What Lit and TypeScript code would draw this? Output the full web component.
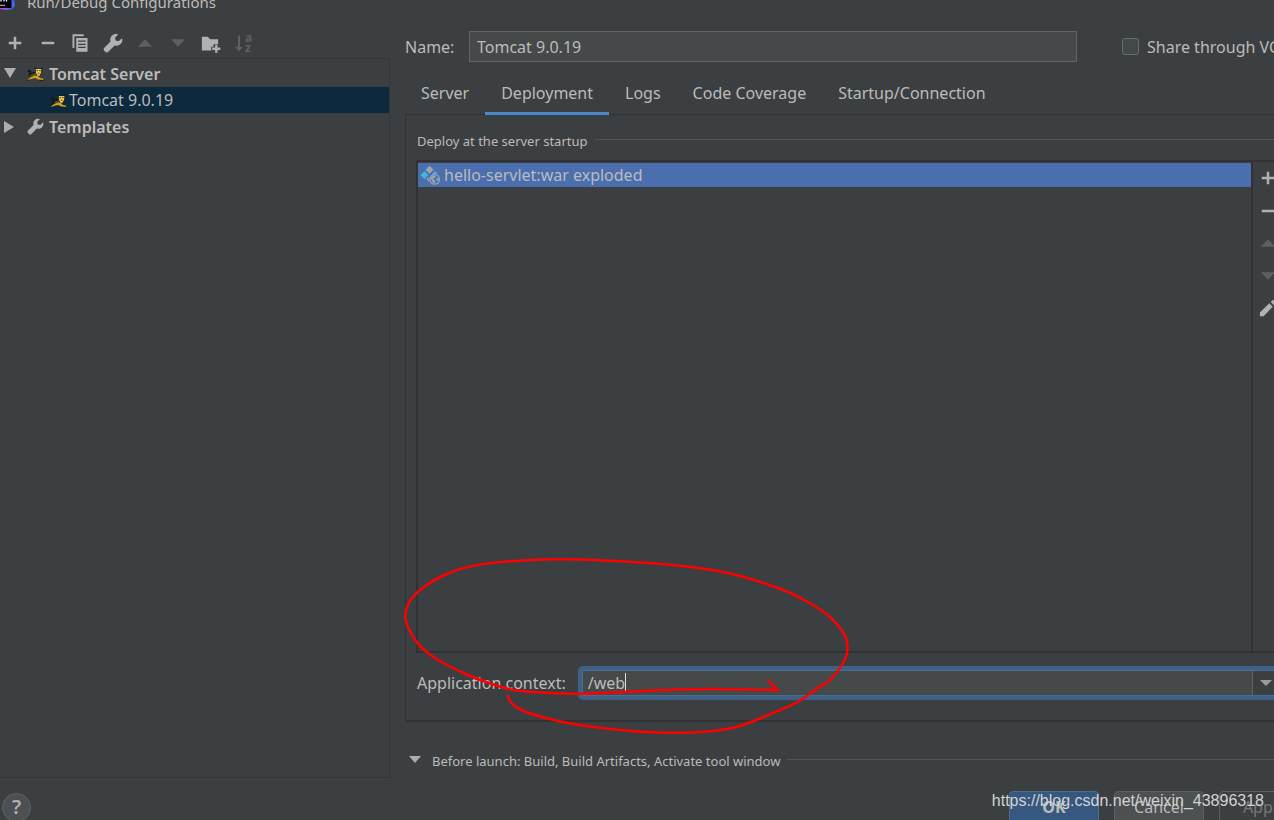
import { LitElement, html, svg, css } from "lit";
import { customElement, property, state } from "lit/decorators.js";
import { classMap } from "lit/directives/class-map.js";

const ICONS: Record<string, unknown> = {
  add: svg`<path d="M7 3h2v4h4v2H9v4H7V9H3V7h4z" />`,
  remove: svg`<path d="M3 7h10v2H3z" />`,
  copy: svg`<path d="M2 1h9v1.5H3.5V12H2z" /><path fill-rule="evenodd" d="M5 4h9v11H5zM6.5 6v1h6V6zM6.5 8.5v1h6v-1zM6.500 11v1h6v-1z" />`,
  wrench: svg`<path d="M15.300 4.100l-2.900 2.500-2.300-.6-.5-2.200 2.600-2.800a4.700 4.700 0 0 0-6.200 5.800L1 11.800a1.700 1.700 0 0 0 0 2.400l.8.8a1.700 1.700 0 0 0 2.400 0l5.100-5.100a4.700 4.700 0 0 0 6-5.800z" />`,
  up: svg`<path d="M2.4 11L8 5l5.6 6z" />`,
  down: svg`<path d="M2.4 5L8 11l5.6-6z" />`,
  folder: svg`<path d="M1.500 3h4.700l2 2h6.300v4h-3.700v2H9v3H1.500z" /><path d="M12.100 9.300H14v2.300h2.300v1.900H14v2.300h-1.900v-2.300H9.800v-1.900h2.300z" />`,
  sort: svg`<path d="M4 2h1.600v9H8l-3.200 3.600L1.600 11H4z" /><text x="9.600" y="7" font-size="9.500" font-weight="700">a</text><text x="9.600" y="14.800" font-size="9.500" font-weight="700">z</text>`,
  edit: svg`<path d="M1.500 11.500L9 4.200l2.800 2.800-7.300 7.500h-3zM10.200 3.100L12 1.300l2.800 2.800L13 5.900z" />`,
  tomcat: svg`<path d="M.6 6.500l2-1.300.8 1-1.200 3 2.600-1.700 2.700-.3" fill="none" stroke="#14191b" stroke-width="1.300" />
    <path d="M4.500 9l4-1.300 3 1-3.500 3-3 .4z" fill="#5d4a14" />
    <path d="M.4 14.200l3.200-2.700 4-1.700 2.600.2 1.600 2 3.400 1v1.400l-4.600-.8-2.800-1.400-3.400.8-2.800 1.700z" fill="#d2a11c" />
    <path d="M.3 14.600l3-.7M11.500 14.300l3.800.3" stroke="#14191b" stroke-width=".9" />
    <path d="M7.300 2.200l2 1.300h3.200l2.100-1.500-.5 5-1.500 2.800H9.200L7.800 7z" fill="#14191b" />
    <path d="M8.200 3.800h5.300l-.2 3.400-1.500 2.900h-2L8.400 7.300z" fill="#e8c65a" />
    <path d="M9 5.300h1.300M11.500 5.300h1.300M10.300 7.800h1.200" stroke="#3b2e10" stroke-width=".9" />`,
  artifact: svg`<path d="M7.600 .6l3.200 3.200L7.600 7 4.400 3.800z" fill="#9aa7b0" />
    <path d="M3.600 4.800l3.200 3.200-3.200 3.200L.4 8z" fill="#40b6e0" />
    <path d="M12 4.900l2.400 2-5.200.3z" fill="#40b6e0" />
    <path d="M6.800 9.400l-1.600 2 2 2.200z" fill="#9aa7b0" />
    <circle cx="11.700" cy="11.500" r="3.800" fill="#4b6eaf" stroke="#9aa7b0" stroke-width="1.100" />
    <path d="M8.300 10l2.300-1.900 2 .4-.4 1.700-1.600.6.400 1.300 1.400.3-.8 2.200-1.500-.6-.6-1.700z" fill="#9aa7b0" />
    <path d="M13.400 10.200l1.600.6-.7 2.200-1.100-.8z" fill="#9aa7b0" />`,
};

@customElement("ide-icon")
class IdeIcon extends LitElement {
  static styles = css`
    :host { display: inline-flex; flex: none; width: 20px; height: 20px; }
    .glyph { width: 100%; height: 100%; fill: currentColor; font-family: "Noto Sans", sans-serif; overflow: visible; }
  `;
  @property() name = "";
  render() {
    return html`<svg class="glyph" viewBox="0 0 16 16" aria-hidden="true">${ICONS[this.name]}</svg>`;
  }
}

type Point = [number, number];

const MARK: Point[] = [
  [778, 690], [735, 689], [693, 689], [640, 691], [605, 693], [580, 694], [548, 693], [517, 691], [500, 687],
  [470, 676], [457, 670], [437, 660], [420, 647], [410, 633], [404, 617], [408, 603], [416, 593],
  [432, 581], [455, 570], [485, 563], [530, 560], [558, 559], [600, 560], [665, 564], [700, 568],
  [730, 573], [758, 581], [790, 592], [824, 611], [837, 624], [846, 636], [848, 648], [846, 658],
  [841, 667], [828, 683], [820, 686], [803, 699], [790, 706], [770, 714], [750, 723], [730, 729],
  [705, 732], [675, 733], [640, 732], [600, 728], [565, 723], [530, 714], [517, 708], [510, 702],
  [508, 696],
];

/** Smooth freehand stroke through the midpoints of a list of points. */
function stroke(points: Point[]): string {
  let d = `M${points[0].join(" ")}`;
  for (let i = 1; i < points.length - 1; i++) {
    const [x, y] = points[i];
    const [nx, ny] = points[i + 1];
    d += `Q${x} ${y} ${(x + nx) / 2} ${(y + ny) / 2}`;
  }
  return d + `L${points[points.length - 1].join(" ")}`;
}

@customElement("app-root")
class AppRoot extends LitElement {
  static styles = css`
    :host {
      display: block; position: relative; height: 100vh; overflow: hidden;
      background: #3c3f41; color: #bbbbbb;
      font: 16px/24px "Noto Sans", "Open Sans", sans-serif;
    }
    * { box-sizing: border-box; }
    button, input { font: inherit; color: inherit; margin: 0; padding: 0; border: 0; background: none; outline: none; }
    .dialog { display: flex; flex-direction: column; width: calc(100% + 48px); height: calc(100vh + 16px); }
    .title { display: flex; align-items: flex-end; gap: 12px; height: 14px; overflow: hidden; }
    .title h1 { margin: 0; font: inherit; font-size: 15px; flex: none; }
    .logo { flex: none; width: 15px; height: 14px; }
    .body { flex: 1; display: flex; gap: 15px; min-height: 0; }
    .side { flex: none; width: 390px; display: flex; flex-direction: column; }
    .tools { display: flex; justify-content: space-between; align-items: center; width: 248px; height: 44px; padding: 14px 0 0; margin-left: 5px; }
    .tool { display: flex; color: #afb1b3; }
    .tool:disabled { color: #5e6060; }
    .tree { flex: 1; margin: 0; padding: 1px 0 0; list-style: none; border: 1px solid #323638; border-left: 0; }
    .node { display: flex; align-items: center; gap: 5px; height: 27px; padding-left: 4px; }
    .node.group { font-weight: 600; }
    .node.leaf { gap: 2px; padding-left: 50px; height: 26px; background: #0d293e; }
    .arrow { flex: none; width: 12px; height: 12px; margin-right: 6px; fill: #adadad; }
    .small { width: 17px; height: 17px; color: #afb1b3; }
    .main { flex: 1; min-width: 0; display: flex; flex-direction: column; padding-top: 17px; }
    .name { display: flex; align-items: center; }
    .name label { flex: none; }
    .name .caption { width: 64px; }
    .name .text { flex: 1; min-width: 0; height: 31px; padding: 0 7px; background: #45494a; border: 1px solid #646464; }
    .share { display: flex; align-items: center; gap: 8px; width: 200px; margin-left: 45px; }
    .check { appearance: none; width: 17px; height: 17px; border: 1px solid #6b6b6b; border-radius: 3px; background: #43494a; }
    .tabs { display: flex; height: 53px; padding-top: 10px; position: relative; }
    .tab { height: 43px; padding: 2px 16px 0; border-bottom: 3px solid transparent; }
    .tab.on { border-color: #4a88c7; }
    .panel { flex: 1; display: flex; flex-direction: column; margin-top: -1px; padding: 16px 0 20px 11px; border: solid #323232; border-width: 1px 0 2px 1px; }
    .heading { display: flex; align-items: center; gap: 7px; font-size: 13px; line-height: 20px; }
    .heading::after { content: ""; flex: 1; height: 1px; margin-bottom: 4px; background: #515557; }
    .deploy { flex: 1; display: flex; margin: 9px 0 13px -1px; border: 2px solid #323232; }
    .list { flex: 1; margin: 0; padding: 1px 0 0; list-style: none; border-right: 2px solid #323232; }
    .item { display: flex; align-items: center; gap: 4px; height: 24px; padding-left: 2px; background: #4b6eaf; }
    .sidebar { flex: none; display: flex; flex-direction: column; justify-content: space-between; width: 67px; height: 156px; padding: 6px 0 0 5px; }
    .context { display: flex; align-items: center; gap: 12px; }
    .combo { flex: 1; display: flex; height: 34px; background: #45494a; border: 4px solid #3d6185; border-radius: 5px; box-shadow: inset 0 0 0 1px #466d94; }
    .value { flex: 1; display: flex; align-items: center; padding-left: 6px; }
    .value input { field-sizing: content; min-width: 8px; }
    .caret { width: 1px; height: 20px; background: #dddddd; }
    .drop { width: 66px; padding-left: 4px; display: flex; align-items: center; border-left: 1px solid #646464; background: #3c3f41; color: #9a9da0; margin: 1px 0; }
    .before { padding: 29px 0 7px; }
    .before .arrow { margin: 0 4px; }
    .footer { display: flex; align-items: center; justify-content: space-between; height: 58px; padding: 0 13px 0 2px; }
    .help { width: 29px; height: 29px; border: 1px solid #5e6366; border-radius: 50%; background: #4c5052; font-size: 20px; font-weight: 600; line-height: 26px; color: #afb1b3; }
    .actions { display: flex; gap: 15px; }
    .action { width: 90px; height: 32px; border: 1px solid #5e6060; border-radius: 4px; background: #4c5052; }
    .action.primary { background: #365880; border-color: #4c708c; font-weight: 700; }
    .action:disabled { background: none; color: #777777; }
    .scribble { position: absolute; inset: 0; width: 1274px; height: 820px; pointer-events: none; fill: none; stroke: #ff0000; stroke-width: 2.500; stroke-linecap: round; stroke-linejoin: round; }
    .watermark { position: absolute; right: 10px; bottom: 7px; font: 16px/24px "Liberation Sans", Arial, sans-serif; color: #d2d3d3; pointer-events: none; }
  `;

  @state() private tab = "Deployment";

  private tool(name: string, label: string, disabled = false) {
    return html`<button class="tool" aria-label=${label} ?disabled=${disabled}><ide-icon name=${name}></ide-icon></button>`;
  }

  render() {
    const tabs = ["Server", "Deployment", "Logs", "Code Coverage", "Startup/Connection"];
    return html`
      <div class="dialog">
        <header class="title">
          <svg class="logo" viewBox="0 0 15 14" aria-hidden="true">
            <path d="M0 0h14l1 6-3 3-4 1-8-1z" fill="#3f6bea" />
            <path d="M0 7.500h6l2 2.500-8-1z" fill="#c04be0" />
            <path d="M0 0h11.500v8H0z" fill="#000" />
            <path d="M0 5.300h5" stroke="#aaa" stroke-width="1.200" />
            <path d="M1 0v1.500M4 0v1.500M6.500 0v1.500" stroke="#fff" stroke-width="1.300" />
          </svg>
          <h1>Run/Debug Configurations</h1>
        </header>
        <div class="body">
          <aside class="side">
            <div class="tools">
              ${this.tool("add", "Add")} ${this.tool("remove", "Remove")} ${this.tool("copy", "Copy")}
              ${this.tool("wrench", "Edit templates")} ${this.tool("up", "Move up", true)}
              ${this.tool("down", "Move down", true)} ${this.tool("folder", "New folder")}
              ${this.tool("sort", "Sort", true)}
            </div>
            <ul class="tree">
              <li class="node group">
                <svg class="arrow" viewBox="0 0 12 12"><path d="M0 0h12L6 10z" /></svg>
                <ide-icon class="small" name="tomcat"></ide-icon>Tomcat Server
              </li>
              <li class="node leaf"><ide-icon class="small" name="tomcat"></ide-icon>Tomcat 9.0.19</li>
              <li class="node group">
                <svg class="arrow" viewBox="0 0 12 12"><path d="M0 0v12L10 6z" /></svg>
                <ide-icon class="small" name="wrench"></ide-icon>Templates
              </li>
            </ul>
          </aside>
          <main class="main">
            <div class="name">
              <label class="caption" for="name">Name:</label>
              <input class="text" id="name" value="Tomcat 9.0.19" />
              <label class="share"><input class="check" type="checkbox" />Share through VCS</label>
            </div>
            <nav class="tabs" role="tablist">
              ${tabs.map(
                (t) => html`<button role="tab" class=${classMap({ tab: true, on: t === this.tab })} @click=${() => (this.tab = t)}>${t}</button>`,
              )}
            </nav>
            <section class="panel">
              <div class="heading">Deploy at the server startup</div>
              <div class="deploy">
                <ul class="list">
                  <li class="item"><ide-icon name="artifact"></ide-icon>hello-servlet:war exploded</li>
                </ul>
                <div class="sidebar">
                  ${this.tool("add", "Add")} ${this.tool("remove", "Remove")} ${this.tool("up", "Move up", true)}
                  ${this.tool("down", "Move down", true)} ${this.tool("edit", "Edit")}
                </div>
              </div>
              <div class="context">
                <label for="context">Application context:</label>
                <div class="combo">
                  <div class="value"><input id="context" value="/web" /><span class="caret"></span></div>
                  <button class="drop" aria-label="Show contexts">
                    <svg width="18" height="12" viewBox="0 0 18 12" fill="currentColor"><path d="M3 3h12L9 9z" /></svg>
                  </button>
                </div>
              </div>
            </section>
            <div class="heading before">
              <svg class="arrow" viewBox="0 0 12 12"><path d="M0 1h12L6 8z" /></svg>
              Before launch: Build, Build Artifacts, Activate tool window
            </div>
          </main>
        </div>
        <footer class="footer">
          <button class="help" aria-label="Help">?</button>
          <div class="actions">
            <button class="action primary">OK</button>
            <button class="action">Cancel</button>
            <button class="action" disabled>Apply</button>
          </div>
        </footer>
      </div>
      <svg class="scribble" viewBox="0 0 1274 820" aria-hidden="true">
        <path d=${stroke(MARK)} />
        <path d="M768 681l10 9h-8" />
      </svg>
      <div class="watermark">https://blog.csdn.net/weixin_43896318</div>
    `;
  }
}
